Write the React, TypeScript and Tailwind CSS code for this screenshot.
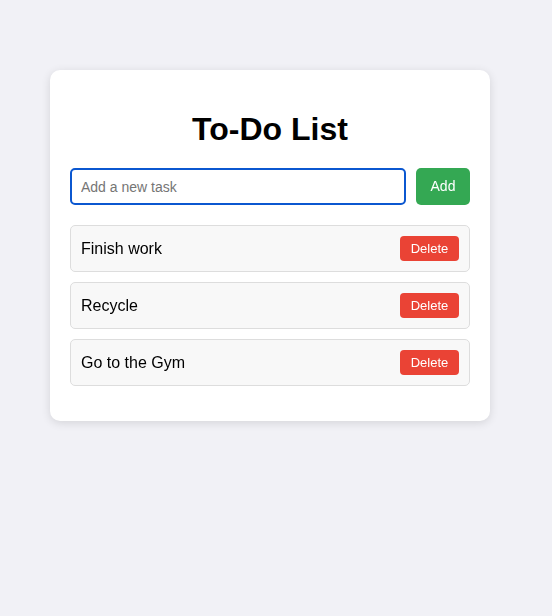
export default function App() {
  const tasks = ["Finish work", "Recycle", "Go to the Gym"];

  return (
    <div className="min-h-screen bg-[#f1f1f6] pt-[70px] font-['Liberation_Sans',Arial,sans-serif]">
      <div className="ml-[50px] w-[440px] rounded-[10px] bg-white p-5 shadow-[0_2px_10px_rgba(0,0,0,0.12)]">
        <h1 className="mt-[21px] mb-[20px] text-center text-[32px] leading-[37px] font-bold text-black">
          To-Do List
        </h1>
        <div className="flex gap-[10px]">
          <input
            type="text"
            placeholder="Add a new task"
            autoFocus
            className="h-[37px] flex-1 rounded-[5px] border-2 border-[#0b57d0] px-[9px] text-[14px] text-black outline-none placeholder:text-[#757575]"
          />
          <button className="h-[37px] w-[54px] rounded-[5px] bg-[#34a853] text-[14px] text-white">
            Add
          </button>
        </div>
        <ul className="mt-5 mb-[15px] flex flex-col gap-[10px]">
          {tasks.map((t) => (
            <li
              key={t}
              className="flex h-[47px] items-center justify-between rounded-[5px] border border-[#dddddd] bg-[#f8f8f8] px-[10px] text-[16px] text-black"
            >
              <span>{t}</span>
              <button className="h-[25px] w-[59px] rounded-[4px] bg-[#ea4335] text-[13px] text-white">
                Delete
              </button>
            </li>
          ))}
        </ul>
      </div>
    </div>
  );
}
